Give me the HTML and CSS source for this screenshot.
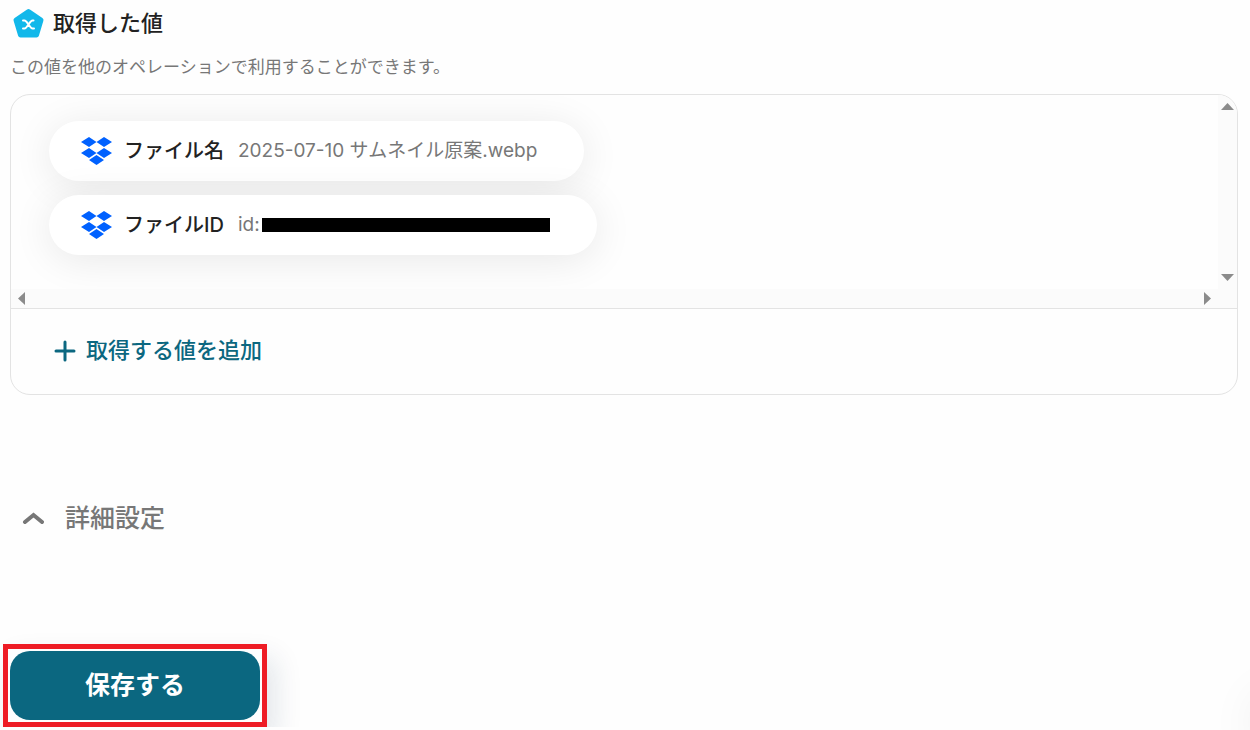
FILE: index.html
```html
<!DOCTYPE html>
<html lang="ja">
<head>
  <meta charset="UTF-8">
  <meta name="viewport" content="width=device-width, initial-scale=1.0">
  <title>取得した値</title>
  <link rel="stylesheet" href="styles.css">
</head>
<body>
  <svg class="symbols" aria-hidden="true">
    <symbol id="dropbox" viewBox="0 0 31 30">
      <path d="M8 1 15.500 6 8 11 0 6ZM23 1 31 6 23 11 15.500 6ZM0 17 8 12 15.500 17 8 22ZM23 12 31 17 23 22 15.500 17ZM8 24 15.500 19 23 24 15.500 29Z"/>
    </symbol>
  </svg>

  <main>
    <section class="output">
      <div class="output-title">
        <svg class="badge" viewBox="0 0 34 34" aria-hidden="true">
          <path class="badge-shape" d="M16.500 5.500 29 14 24.500 29H8.500L4 14Z"/>
          <path class="badge-mark" d="M11 14.500H12.500C14 14.500 14.500 15.500 16.500 18.500S19 22.500 20.500 22.500H22M21.500 14.500H20.500C19 14.500 18.500 15.500 16.500 18.500S14 22.500 12.500 22.500H11"/>
        </svg>
        <h2>取得した値</h2>
      </div>
      <p class="description">この値を他のオペレーションで利用することができます。</p>

      <div class="card">
        <div class="values">
          <ul class="chips">
            <li class="chip">
              <svg class="dropbox"><use href="#dropbox"/></svg>
              <span class="name">ファイル名</span>
              <span class="value">2025-07-10 サムネイル原案.webp</span>
            </li>
            <li class="chip">
              <svg class="dropbox"><use href="#dropbox"/></svg>
              <span class="name">ファイルID</span>
              <span class="value">id:<span class="masked"></span></span>
            </li>
          </ul>
          <div class="scrollbar vertical">
            <svg viewBox="0 0 13 7"><path d="M6.500 0 13 7H0Z"/></svg>
            <svg viewBox="0 0 13 7"><path d="M0 0H13L6.500 7Z"/></svg>
          </div>
          <div class="scrollbar horizontal">
            <svg viewBox="0 0 7 13"><path d="M7 0V13L0 6.500Z"/></svg>
            <svg viewBox="0 0 7 13"><path d="M0 0 7 6.500 0 13Z"/></svg>
          </div>
        </div>
        <div class="card-footer">
          <button type="button" class="add">
            <svg viewBox="0 0 22 22" aria-hidden="true"><path d="M11 2V20M2 11H20"/></svg>
            取得する値を追加
          </button>
        </div>
      </div>
    </section>

    <button type="button" class="details" aria-expanded="false">
      <svg viewBox="0 0 22 14" aria-hidden="true"><path d="M3 11 11.500 4 20 11"/></svg>
      詳細設定
    </button>

    <div class="save-frame">
      <button type="submit" class="save">保存する</button>
    </div>
  </main>

  <div class="side-glow"></div>
</body>
</html>
```
FILE: styles.css
```css
* {
  box-sizing: border-box;
}
body {
  margin: 0;
  background-color: #fefefe;
  color: #222;
  font-family: Inter, "Noto Sans CJK JP", sans-serif;
  overflow-x: hidden;
}
button {
  border: none;
  background: none;
  padding: 0;
  font-family: inherit;
  cursor: pointer;
}
h2, p, ul {
  margin: 0;
  padding: 0;
}
.symbols {
  position: absolute;
  width: 0;
  height: 0;
}

/* Output values */
.output {
  padding: 6px 12px 0 10px;
}
.output-title {
  display: flex;
  align-items: center;
  gap: 7px;
  padding-left: 2px;
}
.badge {
  width: 34px;
  height: 34px;
}
.badge-shape {
  fill: #12b8ea;
  stroke: #12b8ea;
  stroke-width: 5;
  stroke-linejoin: round;
}
.badge-mark {
  fill: none;
  stroke: #fff;
  stroke-width: 2;
  stroke-linecap: round;
}
h2 {
  font-size: 22px;
  line-height: 34px;
  font-weight: 500;
}
.description {
  margin-top: 14px;
  color: #777;
  font-size: 17px;
  line-height: 26px;
}
.card {
  margin-top: 14px;
  border: 1px solid #e3e3e3;
  border-radius: 20px;
  overflow: hidden;
}
.values {
  display: grid;
  grid-template-columns: 1fr 19px;
  grid-template-rows: 194px 19px;
  border-bottom: 1px solid #e3e3e3;
}
.chips {
  display: flex;
  flex-direction: column;
  align-items: flex-start;
  gap: 14px;
  padding: 26px 38px;
  list-style: none;
  overflow: hidden;
}
.chip {
  display: flex;
  align-items: center;
  height: 60px;
  padding: 0 47px 0 32px;
  border-radius: 30px;
  background-color: #fff;
  box-shadow: 0 5px 40px rgba(0, 0, 0, 0.09);
  line-height: 28px;
  white-space: nowrap;
}
.dropbox {
  width: 31px;
  height: 30px;
  margin-right: 12px;
  fill: #0061ff;
}
.name {
  margin-right: 14px;
  font-size: 20px;
  font-weight: 500;
}
.value {
  display: flex;
  align-items: center;
  color: #777;
  font-size: 19px;
}
.masked {
  width: 288px;
  height: 14px;
  margin-left: 2px;
  background-color: #000;
}
.scrollbar {
  display: flex;
  justify-content: space-between;
  align-items: center;
  background-color: #fbfbfb;
  fill: #8b8b8b;
}
.vertical {
  flex-direction: column;
  padding: 8px 0;
}
.vertical svg {
  width: 13px;
  height: 7px;
}
.horizontal {
  grid-column: 1 / 3;
  padding: 0 26px 0 7px;
}
.horizontal svg {
  width: 7px;
  height: 13px;
}
.card-footer {
  padding: 25px 43px 27px;
}
.add {
  display: flex;
  align-items: center;
  gap: 10px;
  color: #0b6780;
  font-size: 22px;
  line-height: 33px;
  font-weight: 500;
}
.add svg {
  width: 22px;
  height: 22px;
}
.add path, .details path {
  fill: none;
  stroke: currentColor;
  stroke-width: 3;
  stroke-linecap: round;
}

/* Details */
.details {
  display: flex;
  align-items: center;
  gap: 21px;
  margin: 104px 22px 0;
  color: #777;
  font-size: 25px;
  line-height: 38px;
  font-weight: 500;
}
.details svg {
  width: 22px;
  height: 14px;
}
.details path {
  stroke-width: 4;
}

/* Save */
.save-frame {
  width: 264px;
  margin: 107px 3px 0;
  padding: 2px;
  border: 5px solid #ee1c25;
  box-shadow: 8px 14px 28px rgba(20, 50, 80, 0.12);
}
.save {
  width: 100%;
  height: 69px;
  padding-bottom: 5px;
  border-radius: 20px;
  background-color: #0b6780;
  color: #fff;
  font-size: 25px;
  font-weight: 700;
}

.side-glow {
  position: fixed;
  right: -60px;
  bottom: -20px;
  width: 56px;
  height: 56px;
  border-radius: 50%;
  box-shadow: 0 0 50px rgba(0, 0, 0, 0.08);
}
```
